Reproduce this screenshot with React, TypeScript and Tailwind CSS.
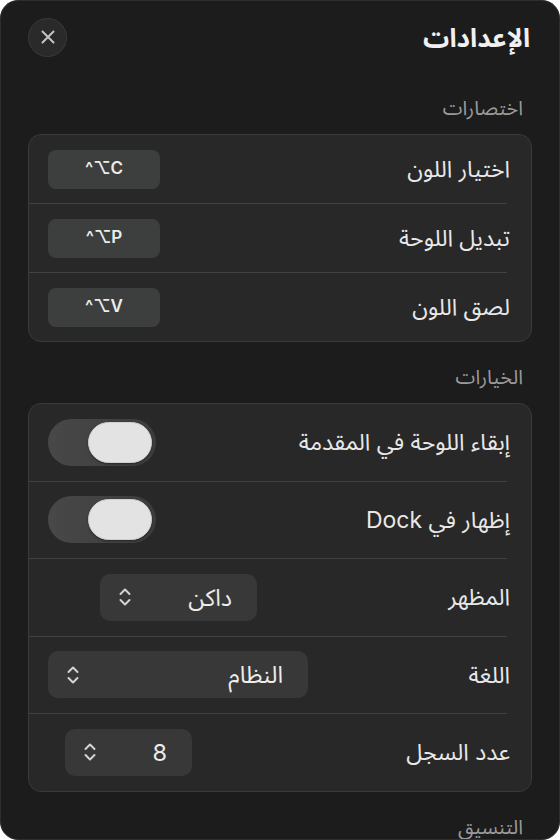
import React from "react";

const font = { fontFamily: 'Inter, "Noto Sans Arabic", "DejaVu Sans", sans-serif' };

function Chevrons() {
  return (
    <svg width="16" height="22" viewBox="0 0 16 22" fill="none" stroke="#d4d4d4" strokeWidth="2" strokeLinecap="round" strokeLinejoin="round">
      <path d="M3.5 8 L8 3.5 L12.5 8" />
      <path d="M3.5 14 L8 18.5 L12.5 14" />
    </svg>
  );
}

function SectionLabel({ children }: { children: React.ReactNode }) {
  return (
    <div className="pt-[23px] pb-[14px] pr-[9px] h-[61px] text-[20px] leading-[24px] tracking-[0.08em] text-[#9a9a9a]">
      {children}
    </div>
  );
}

function Divider() {
  return <div className="h-px bg-[#424242] mr-[24px]" />;
}

function Keycap({ keys }: { keys: string }) {
  return (
    <div dir="ltr" className="w-[112px] h-[39px] rounded-[8px] bg-[#3d3f3e] flex items-center justify-center text-[17px] font-semibold text-[#ececec]">
      {keys}
    </div>
  );
}

function Toggle() {
  return (
    <div dir="ltr" className="w-[108px] h-[47px] rounded-full bg-gradient-to-r from-[#484848] to-[#3c3c3c] flex items-center justify-end pr-[4px]">
      <div className="w-[64px] h-[41px] rounded-full bg-[#e3e3e3] border border-[#cfcfcf] shadow-[0_1px_2px_rgba(0,0,0,0.4)]" />
    </div>
  );
}

function Popup({ value, width, extra }: { value: string; width: string; extra?: string }) {
  return (
    <div className={`h-[47px] rounded-[10px] bg-[#383838] flex items-center justify-between pr-[25px] pl-[17px] ${width} ${extra ?? ""}`}>
      <span className="text-[23.5px] text-[#ececec]">{value}</span>
      <Chevrons />
    </div>
  );
}

function Label({ children }: { children: React.ReactNode }) {
  return <span className="text-[23px] text-[#e8e8e8]">{children}</span>;
}

export default function App() {
  const shortcuts = [
    { label: "اختيار اللون", keys: "^⌥C" },
    { label: "تبديل اللوحة", keys: "^⌥P" },
    { label: "لصق اللون", keys: "^⌥V" },
  ];

  return (
    <div style={font} className="bg-white">
      <div dir="rtl" className="w-[560px] h-[840px] rounded-[18px] bg-[#1c1c1c] border border-[#2e2e2e] overflow-hidden px-[27px]">
        <div className="h-[72px] flex items-center justify-between pr-[2px]">
          <h1 className="text-[26px] font-bold text-[#f0f0f0]">الإعدادات</h1>
          <button className="w-[39px] h-[39px] rounded-full bg-[#2a2a2a] border border-[#3b3b3b] flex items-center justify-center">
            <svg width="16" height="16" viewBox="0 0 16 16" fill="none" stroke="#c4c4c4" strokeWidth="2" strokeLinecap="round">
              <path d="M2.5 2.5 L13.5 13.5 M13.5 2.5 L2.5 13.5" />
            </svg>
          </button>
        </div>

        <SectionLabel>اختصارات</SectionLabel>
        <div className="rounded-[13px] bg-[#282828] border border-[#3a3a3a]">
          {shortcuts.map((s, i) => (
            <div key={s.label}>
              {i > 0 && <Divider />}
              <div className="h-[68px] flex items-center justify-between pr-[21px] pl-[19px]">
                <Label>{s.label}</Label>
                <Keycap keys={s.keys} />
              </div>
            </div>
          ))}
        </div>

        <SectionLabel>الخيارات</SectionLabel>
        <div className="rounded-[13px] bg-[#282828] border border-[#3a3a3a]">
          <div className="h-[76.5px] flex items-center justify-between pr-[21px] pl-[19px]">
            <Label>إبقاء اللوحة في المقدمة</Label>
            <Toggle />
          </div>
          <Divider />
          <div className="h-[76.5px] flex items-center justify-between pr-[21px] pl-[19px]">
            <Label>إظهار في Dock</Label>
            <Toggle />
          </div>
          <Divider />
          <div className="h-[76.5px] flex items-center justify-between pr-[21px] pl-[19px]">
            <Label>المظهر</Label>
            <Popup value="داكن" width="w-[157px]" extra="ml-[52px]" />
          </div>
          <Divider />
          <div className="h-[76.5px] flex items-center justify-between pr-[21px] pl-[19px]">
            <Label>اللغة</Label>
            <Popup value="النظام" width="w-[260px]" />
          </div>
          <Divider />
          <div className="h-[76.5px] flex items-center justify-between pr-[21px] pl-[19px]">
            <Label>عدد السجل</Label>
            <Popup value="8" width="w-[127px]" extra="ml-[17px]" />
          </div>
        </div>

        <SectionLabel>التنسيق</SectionLabel>
      </div>
    </div>
  );
}
